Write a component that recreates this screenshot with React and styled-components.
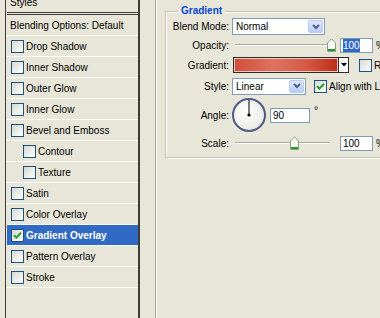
import React from "react";
import styled, { createGlobalStyle } from "styled-components";

const bg = "#e7e6d8";
const xpBlue = "#7f9db9";

const GlobalStyle = createGlobalStyle`
  html, body { margin: 0; padding: 0; }
  body {
    background: ${bg};
    width: 380px;
    height: 318px;
    overflow: hidden;
    font-family: "Liberation Sans", Arial, sans-serif;
    font-size: 10px;
    color: #000;
  }
`;

const Page = styled.div({
  display: "flex",
  width: "380px",
  height: "318px",
  overflow: "hidden",
});

const StylesPanel = styled.div({
  marginLeft: "5px",
  marginTop: "-8px",
  width: "131px",
  paddingLeft: "1px",
  borderLeft: "1px solid #3b3b3b",
  borderRight: "2px solid #3b3b3b",
  flexShrink: 0,
  display: "flex",
  flexDirection: "column",
});

const PanelHeader = styled.div({
  height: "20px",
  display: "flex",
  alignItems: "center",
  paddingLeft: "3px",
  borderBottom: "3px double #3b3b3b",
});

const Row = styled.div`
  height: 20px;
  display: flex;
  align-items: center;
  gap: 2px;
  padding-left: ${(p) => (p.$plain ? 3 : p.$indent ? 16 : 4)}px;
  border-bottom: 1px solid #fbfbf5;
  background: ${(p) => (p.$active ? "#316ac5" : "transparent")};
  color: ${(p) => (p.$active ? "#fff" : "#000")};
  font-weight: ${(p) => (p.$active ? "bold" : "normal")};
  white-space: nowrap;
`;

const Box = styled.span({
  width: "13px",
  height: "13px",
  boxSizing: "border-box",
  border: "1px solid #1c5180",
  background: "linear-gradient(135deg, #d8d8d2 0%, #f4f4f0 70%, #fff 100%)",
  display: "inline-flex",
  alignItems: "center",
  justifyContent: "center",
  flexShrink: 0,
});

const Checkbox = ({ checked }) => (
  <Box>
    {checked && (
      <svg width="9" height="9" viewBox="0 0 9 9">
        <path d="M1 4.2 L3.4 6.6 L8 1.8" stroke="#21a121" strokeWidth="2" fill="none" />
      </svg>
    )}
  </Box>
);

const OptionsPanel = styled.div({
  marginLeft: "15px",
  borderLeft: "1px solid #a6a597",
  boxShadow: "inset 1px 0 0 #fff",
  flex: 1,
  paddingTop: "5px",
  paddingLeft: "9px",
  minWidth: "300px",
});

const Group = styled.fieldset({
  margin: 0,
  padding: "0 0 5px 0",
  width: "300px",
  border: "1px solid #c3c2b2",
  boxShadow: "inset 1px 1px 0 #fff, 1px 1px 0 #fff",
});

const Legend = styled.legend({
  marginLeft: "12px",
  padding: "0 3px",
  lineHeight: "12px",
  fontWeight: "bold",
  color: "#0046d5",
});

const FieldRow = styled.div`
  height: ${(p) => p.$h}px;
  display: flex;
  align-items: center;
`;

const Label = styled.span({
  width: "63px",
  marginRight: "3px",
  textAlign: "right",
  flexShrink: 0,
  whiteSpace: "nowrap",
});

const SelectBox = styled.div`
  width: ${(p) => p.$w}px;
  height: 17px;
  box-sizing: border-box;
  border: 1px solid ${xpBlue};
  background: #fff;
  display: flex;
  align-items: center;
  justify-content: space-between;
  padding: 1px 1px 1px 3px;
`;

const DropButton = styled.span({
  width: "15px",
  height: "13px",
  boxSizing: "border-box",
  border: "1px solid #bccbf4",
  borderRadius: "2px",
  background: "linear-gradient(#dfe7fd, #b9cbf7)",
  display: "flex",
  alignItems: "center",
  justifyContent: "center",
});

const Select = ({ w, value }) => (
  <SelectBox $w={w}>
    <span>{value}</span>
    <DropButton>
      <svg width="8" height="6" viewBox="0 0 8 6">
        <path d="M1 1 L4 4 L7 1" stroke="#4d6185" strokeWidth="2" fill="none" />
      </svg>
    </DropButton>
  </SelectBox>
);

const Slider = styled.div({
  position: "relative",
  width: "108px",
  height: "14px",
  flexShrink: 0,
});

const Track = styled.div({
  position: "absolute",
  left: "3px",
  right: "10px",
  top: "6px",
  height: "1px",
  background: "#a9a99c",
  boxShadow: "0 1px 0 #fff",
  borderRadius: "1px",
});

const Thumb = styled.svg({
  position: "absolute",
  top: "0px",
});

const SliderControl = ({ pos }) => (
  <Slider>
    <Track />
    <Thumb width="9" height="14" viewBox="0 0 9 14" style={{ left: pos }}>
      <path d="M0.5 5 L4.5 0.8 L8.5 5 L8.5 13.5 L0.5 13.5 Z" fill="#fbfbf8" stroke="#8f9a8f" />
      <rect x="1" y="11" width="7" height="2" fill="#21a121" />
    </Thumb>
  </Slider>
);

const Input = styled.div`
  width: ${(p) => p.$w}px;
  height: 15px;
  box-sizing: border-box;
  border: 1px solid ${xpBlue};
  background: #fff;
  display: flex;
  align-items: center;
  padding-left: 2px;
  flex-shrink: 0;
`;

const Selected = styled.span({
  background: "#316ac5",
  color: "#fff",
  padding: "1px 0",
  lineHeight: "11px",
});

const Unit = styled.span({
  marginLeft: "3px",
});

const Degree = styled.span({
  marginLeft: "4px",
  alignSelf: "flex-start",
  marginTop: "9px",
});

const GradientPicker = styled.div({
  marginLeft: "1px",
  height: "16px",
  display: "flex",
  border: "1px solid #2b2b2b",
  boxSizing: "border-box",
});

const Swatch = styled.div({
  width: "104px",
  border: "1px solid #f0c8c0",
  boxSizing: "border-box",
  background: "linear-gradient(90deg, #cf4f3b 0%, #df7262 38%, #d45a46 70%, #bd2e19 100%)",
});

const SwatchArrow = styled.div({
  width: "9px",
  background: "#fff",
  borderLeft: "1px solid #2b2b2b",
  display: "flex",
  alignItems: "center",
  justifyContent: "center",
});

const Inline = styled.span`
  display: flex;
  align-items: center;
  gap: 2px;
  margin-left: ${(p) => p.$ml}px;
  white-space: nowrap;
`;

const Dial = styled.div({
  position: "relative",
  width: "34px",
  height: "34px",
  boxSizing: "border-box",
  borderRadius: "50%",
  border: "2px solid #4d5a86",
  background: "radial-gradient(circle at 40% 40%, #fff, #e3e3dc)",
  marginRight: "4px",
  flexShrink: 0,
});

const Needle = styled.svg({
  position: "absolute",
  left: 0,
  top: 0,
});

const AngleDial = () => (
  <Dial>
    <Needle width="30" height="30" viewBox="0 0 30 30">
      <line x1="15" y1="15" x2="15" y2="0" stroke="#000" strokeWidth="1" />
      <circle cx="15" cy="15" r="1.6" fill="#000" />
    </Needle>
  </Dial>
);

const effects = [
  { name: "Drop Shadow" },
  { name: "Inner Shadow" },
  { name: "Outer Glow" },
  { name: "Inner Glow" },
  { name: "Bevel and Emboss" },
  { name: "Contour", indent: true },
  { name: "Texture", indent: true },
  { name: "Satin" },
  { name: "Color Overlay" },
  { name: "Gradient Overlay", active: true },
  { name: "Pattern Overlay" },
  { name: "Stroke" },
];

export default function App() {
  return (
    <>
      <GlobalStyle />
      <Page>
        <StylesPanel>
          <PanelHeader>Styles</PanelHeader>
          <Row $plain>Blending Options: Default</Row>
          {effects.map((e) => (
            <Row key={e.name} $indent={e.indent} $active={e.active}>
              <Checkbox checked={e.active} />
              {e.name}
            </Row>
          ))}
        </StylesPanel>
        <OptionsPanel>
          <Group>
            <Legend>Gradient</Legend>
            <FieldRow $h={19}>
              <Label>Blend Mode:</Label>
              <Select w={93} value="Normal" />
            </FieldRow>
            <FieldRow $h={18}>
              <Label>Opacity:</Label>
              <SliderControl pos={95} />
              <Input $w={33}>
                <Selected>100</Selected>
              </Input>
              <Unit>%</Unit>
            </FieldRow>
            <FieldRow $h={22}>
              <Label>Gradient:</Label>
              <GradientPicker>
                <Swatch />
                <SwatchArrow>
                  <svg width="6" height="4" viewBox="0 0 6 4">
                    <path d="M0 0 H6 L3 3.5 Z" fill="#000" />
                  </svg>
                </SwatchArrow>
              </GradientPicker>
              <Inline $ml={10}>
                <Checkbox />
                Reverse
              </Inline>
            </FieldRow>
            <FieldRow $h={20}>
              <Label>Style:</Label>
              <Select w={74} value="Linear" />
              <Inline $ml={8}>
                <Checkbox checked />
                Align with Layer
              </Inline>
            </FieldRow>
            <FieldRow $h={38}>
              <Label>Angle:</Label>
              <AngleDial />
              <Input $w={40}>90</Input>
              <Degree>°</Degree>
            </FieldRow>
            <FieldRow $h={18}>
              <Label>Scale:</Label>
              <SliderControl pos={58} />
              <Input $w={33}>100</Input>
              <Unit>%</Unit>
            </FieldRow>
          </Group>
        </OptionsPanel>
      </Page>
    </>
  );
}
